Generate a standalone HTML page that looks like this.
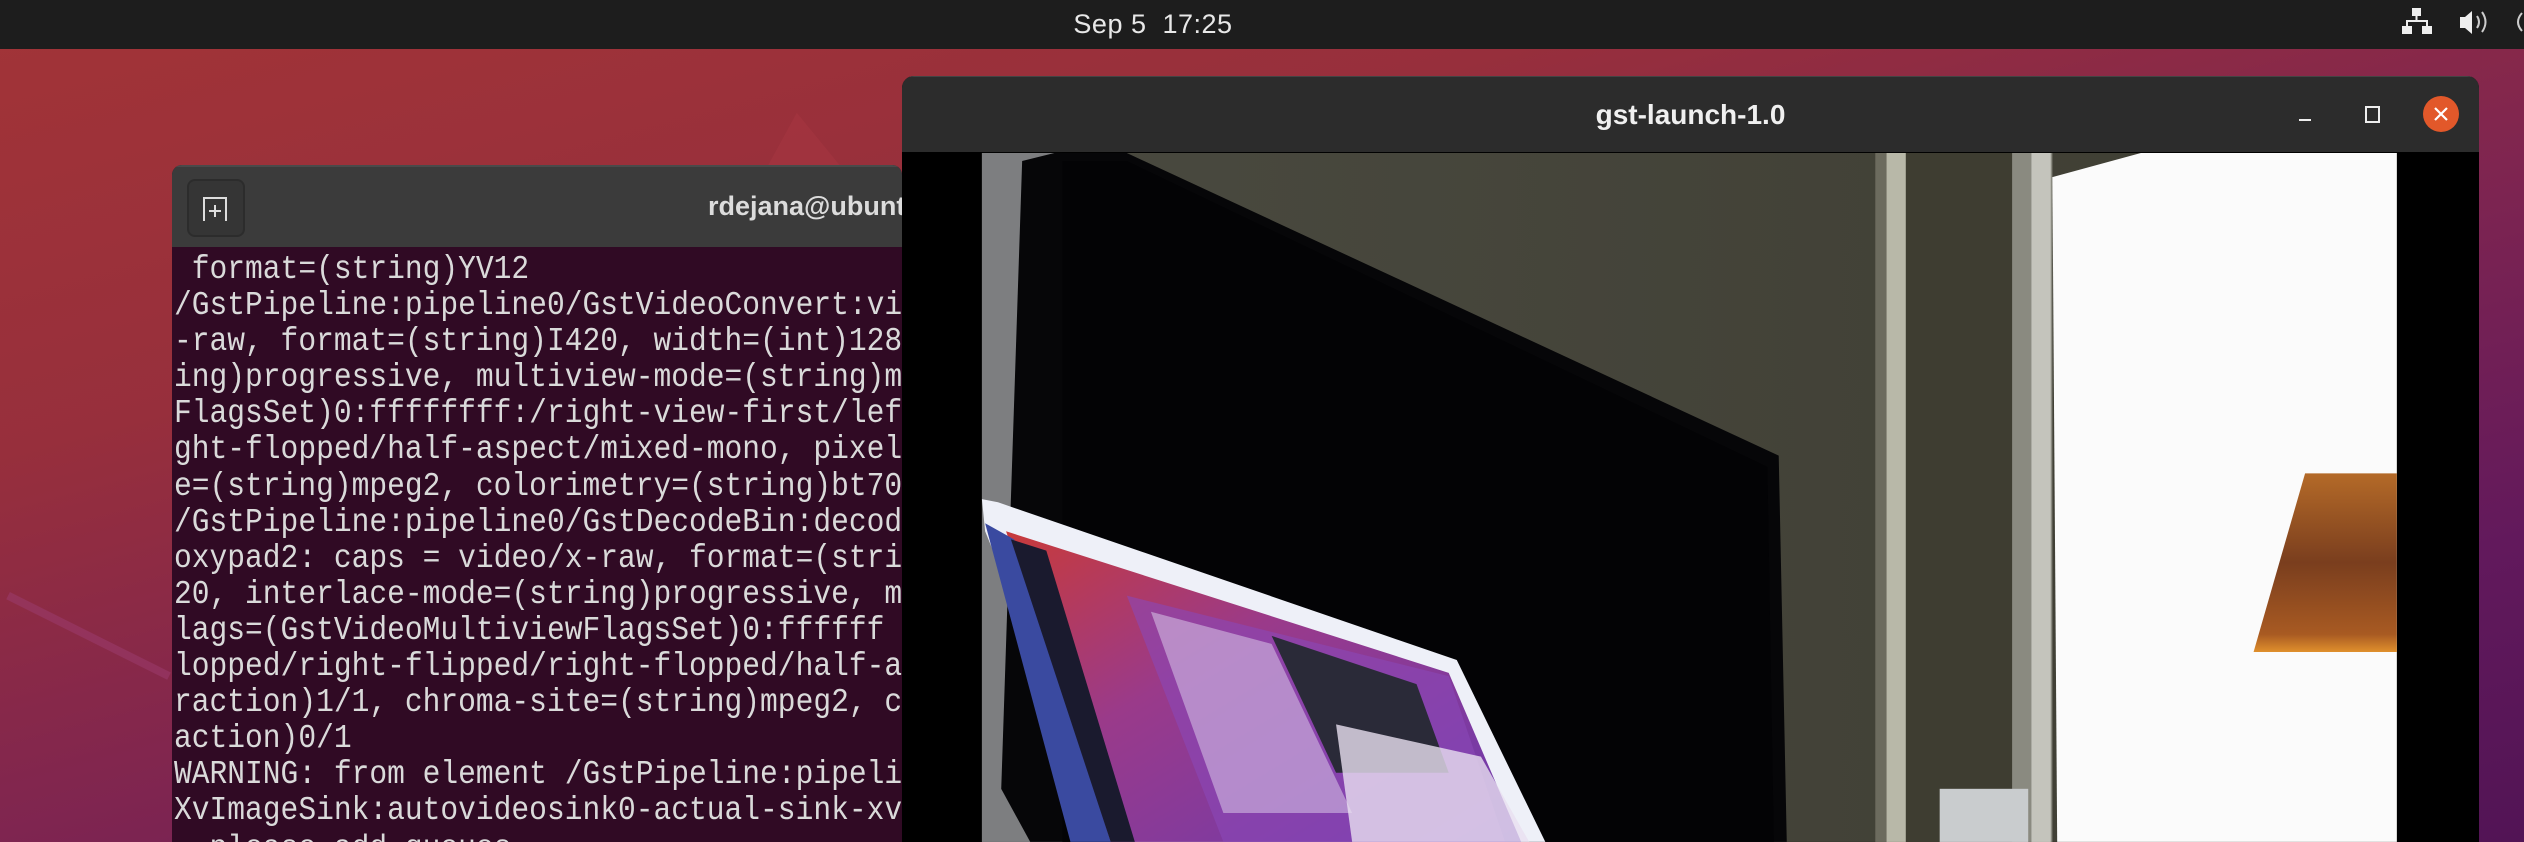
<!DOCTYPE html>
<html><head><meta charset="utf-8"><style>
html,body{margin:0;padding:0;width:2524px;height:842px;overflow:hidden}
body{position:relative;font-family:"Liberation Sans",sans-serif;
background:linear-gradient(165deg,#a23437 0%,#972f3c 30%,#7f2550 55%,#62195c 80%,#521455 100%);}
.top{position:absolute;left:0;top:0;width:2524px;height:49px;background:#1d1d1d}
.clock{position:absolute;left:0;width:2306px;top:9px;text-align:center;color:#e8e8e8;font-size:27px;letter-spacing:0.5px}
.term{position:absolute;left:172px;top:165px;width:730px;height:677px;background:#300a24;border-radius:10px 10px 0 0;overflow:hidden}
.th{position:absolute;left:0;top:0;right:0;height:80px;background:#3b3b3b;border-top:2px solid #4a4a4a}
.tb{position:absolute;left:15px;top:12px;width:54px;height:54px;border:2px solid #2c2c2c;border-radius:8px;background:#353535}
.tt{position:absolute;left:536px;top:24px;color:#dcdcdc;font-size:27px;font-weight:bold}
.tx{position:absolute;left:2px;top:86px;width:728px;height:580px;overflow:hidden;color:#dadada;font-family:"Liberation Mono",monospace;font-size:29.6px;line-height:36.1px;white-space:pre}
.tx div{transform:scaleY(1.12);transform-origin:left center}
.last{position:absolute;left:2px;top:664px;width:728px;height:13px;overflow:hidden;color:#dadada;font-family:"Liberation Mono",monospace;font-size:29.6px;line-height:36.1px;white-space:pre}
.gst{position:absolute;left:902px;top:76px;width:1577px;height:766px;background:#000;border-radius:12px 12px 0 0;overflow:hidden}
.gh{position:absolute;left:0;top:0;right:0;height:75px;background:#2c2c2c;border-top:1px solid #444}
.gt{position:absolute;left:0;right:0;top:22px;text-align:center;color:#f0f0f0;font-size:28px;font-weight:bold}
</style></head><body>
<div class="top">
<div class="clock">Sep 5&nbsp; 17:25</div>
<svg style="position:absolute;left:2380px;top:0" width="144" height="49">
<rect x="32" y="8" width="9" height="8" fill="#eee"/><rect x="35.5" y="16" width="2" height="5" fill="#eee"/>
<rect x="26" y="20" width="22" height="2" fill="#eee"/><rect x="26" y="20" width="2" height="6" fill="#eee"/><rect x="46" y="20" width="2" height="6" fill="#eee"/>
<rect x="22" y="26" width="10" height="8" fill="#eee"/><rect x="42" y="26" width="10" height="8" fill="#eee"/>
<path d="M80 17h5l7-6v23l-7-6h-5z" fill="#eee"/>
<path d="M97 16q4 6 0 12M102 12q7 10 0 20" stroke="#ccc" stroke-width="2" fill="none"/>
<path d="M142 13q-8 9 0 18" stroke="#ccc" stroke-width="2" fill="none"/>
</svg>
</div>
<svg style="position:absolute;left:0;top:0" width="2524" height="842" viewBox="0 0 1568 523">
<polygon points="465,125 495,70 540,125" fill="#b03a44" opacity="0.35"/>
<line x1="5" y1="370" x2="105" y2="420" stroke="#9a3a6a" stroke-width="5" opacity="0.6"/>
</svg>
<div class="term">
<div class="th"><div class="tb"><svg width="54" height="54"><path d="M15 40V17h22v23" stroke="#ddd" stroke-width="2" fill="none"/><path d="M26 24v12M20 30h12" stroke="#ddd" stroke-width="2"/></svg></div><div class="tt">rdejana@ubuntu</div></div>
<div class="tx"><div> format=(string)YV12</div><div>/GstPipeline:pipeline0/GstVideoConvert:vi</div><div>-raw, format=(string)I420, width=(int)128</div><div>ing)progressive, multiview-mode=(string)m</div><div>FlagsSet)0:ffffffff:/right-view-first/lef</div><div>ght-flopped/half-aspect/mixed-mono, pixel</div><div>e=(string)mpeg2, colorimetry=(string)bt70</div><div>/GstPipeline:pipeline0/GstDecodeBin:decod</div><div>oxypad2: caps = video/x-raw, format=(stri</div><div>20, interlace-mode=(string)progressive, m</div><div>lags=(GstVideoMultiviewFlagsSet)0:ffffff</div><div>lopped/right-flipped/right-flopped/half-a</div><div>raction)1/1, chroma-site=(string)mpeg2, c</div><div>action)0/1</div><div>WARNING: from element /GstPipeline:pipeli</div><div>XvImageSink:autovideosink0-actual-sink-xv</div></div>
<div class="last">  please add queues.</div>
</div>
<div class="gst">
<div class="gh"><div class="gt">gst-launch-1.0</div>
<svg style="position:absolute;left:1380px;top:0" width="197" height="75">
<rect x="17" y="42" width="12" height="2" fill="#eee"/>
<rect x="84" y="30" width="13" height="15" stroke="#eee" stroke-width="2" fill="none"/>
<circle cx="159" cy="37" r="18" fill="#e2582a"/>
<path d="M153 31l12 12M165 31l-12 12" stroke="#fff" stroke-width="2.2"/>
</svg></div>
</div>
<svg style="position:absolute;left:0;top:0" width="2524" height="842" viewBox="0 0 1568 523">
<defs>
<linearGradient id="wall" x1="0" x2="1"><stop offset="0" stop-color="#4a4a40"/><stop offset="1" stop-color="#3e3d32"/></linearGradient>
<linearGradient id="scr" x1="0" y1="0" x2="1" y2="1"><stop offset="0" stop-color="#c83a3a"/><stop offset="0.4" stop-color="#9a3a8a"/><stop offset="1" stop-color="#6a3ab0"/></linearGradient>
<linearGradient id="lamp" x1="0" y1="0" x2="0" y2="1"><stop offset="0" stop-color="#b46a28"/><stop offset="0.5" stop-color="#7a3e1e"/><stop offset="0.9" stop-color="#a85a22"/><stop offset="1" stop-color="#e0902c"/></linearGradient>
</defs>
<rect x="610" y="95" width="879" height="428" fill="url(#wall)"/>
<rect x="610" y="95" width="50" height="428" fill="#7d7e80"/>
<polygon points="655,95 700,95 1105,283 1110,523 640,523 622,490 635,100" fill="#060608"/>
<polygon points="660,100 700,100 1098,290 1102,523 660,523" fill="#030305"/>
<rect x="1165" y="95" width="8" height="428" fill="#6c6b5e"/>
<rect x="1172" y="95" width="12" height="428" fill="#b8b8a8"/>
<rect x="1184" y="95" width="66" height="428" fill="#3e3d31"/>
<rect x="1250" y="95" width="25" height="428" fill="#8a8a80"/>
<rect x="1262" y="95" width="12" height="428" fill="#c4c4bc"/>
<polygon points="1275,110 1330,95 1489,95 1489,523 1278,523" fill="#fbfbfb"/>
<polygon points="1432,294 1489,294 1489,405 1400,405" fill="url(#lamp)"/>
<rect x="1205" y="490" width="55" height="33" fill="#c9ccce"/>
<polygon points="610,310 620,312 905,410 960,523 690,523 612,330" fill="#eef0f8"/>
<polygon points="625,330 900,418 945,523 690,523" fill="url(#scr)"/>
<polygon points="700,370 900,420 935,523 760,523" fill="#8a48b8" opacity="0.6"/>
<polygon points="715,380 790,400 840,505 760,505" fill="#d8c8e8" opacity="0.55"/>
<polygon points="790,395 880,425 900,480 830,480" fill="#2a2a38"/>
<polygon points="830,450 920,470 950,523 840,523" fill="#e8e0f0" opacity="0.8"/>
<polygon points="612,325 630,335 690,523 665,523" fill="#3a4aa0"/>
<polygon points="628,335 650,342 705,523 690,523" fill="#1a1a2e"/>
</svg>
</body></html>
